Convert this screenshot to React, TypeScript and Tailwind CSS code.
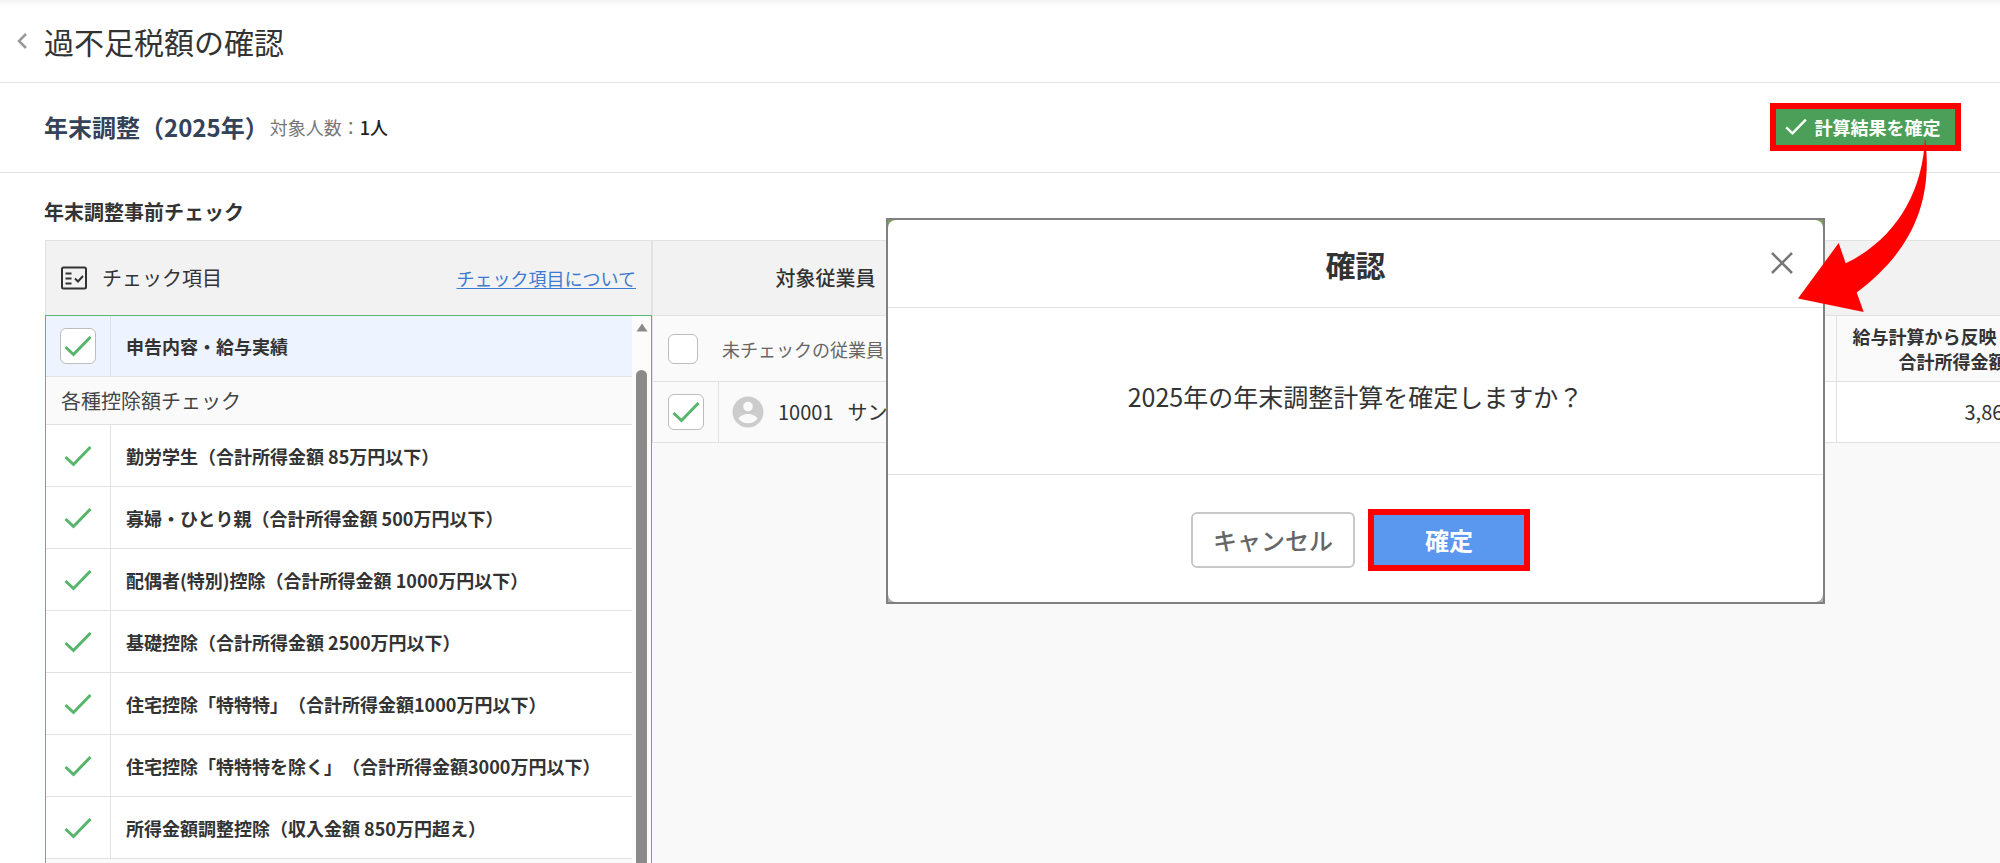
import { ReactNode, useState } from "react";

const deductionChecks = [
  "勤労学生（合計所得金額 85万円以下）",
  "寡婦・ひとり親（合計所得金額 500万円以下）",
  "配偶者(特別)控除（合計所得金額 1000万円以下）",
  "基礎控除（合計所得金額 2500万円以下）",
  "住宅控除「特特特」（合計所得金額1000万円以下）",
  "住宅控除「特特特を除く」（合計所得金額3000万円以下）",
  "所得金額調整控除（収入金額 850万円超え）",
];

function CheckMark({ className }: { className?: string }) {
  return (
    <svg viewBox="0 0 28 22" fill="none" stroke="currentColor" strokeWidth="3" className={className}>
      <path d="M1.5 12 9.5 19.5 26.5 2" />
    </svg>
  );
}

function CheckBox({ label, initial, small }: { label: string; initial?: boolean; small?: boolean }) {
  const [checked, setChecked] = useState(!!initial);

  return (
    <label className={`relative block shrink-0 ${small ? "size-[30px]" : "size-9"}`}>
      <input
        type="checkbox"
        aria-label={label}
        checked={checked}
        onChange={(e) => setChecked(e.target.checked)}
        className="block size-full appearance-none rounded-md border border-[#bdbdbd] bg-white"
      />
      {checked ? (
        <CheckMark className="pointer-events-none absolute inset-0 m-auto w-7 text-[#55b56a]" />
      ) : null}
    </label>
  );
}

function ListIcon() {
  return (
    <svg viewBox="0 0 26 24" fill="none" stroke="#333" strokeWidth="2" className="h-6 w-[26px]">
      <rect x="1" y="1.5" width="24" height="21" rx="1.5" />
      <path d="M4.5 7.5h6M4.5 12.5h6M4.5 17.5h6" />
      <path d="m14 12.500 3 3 5-5.500" />
    </svg>
  );
}

function CheckRow({ mark, children, active }: { mark: ReactNode; children: ReactNode; active?: boolean }) {
  return (
    <li className={`flex shrink-0 border-b border-[#e2e2e2] ${active ? "h-[61px] bg-[#edf4ff]" : "h-[62px] bg-white"}`}>
      <div className="flex w-[65px] items-center justify-center border-r border-[#e2e2e2]">{mark}</div>
      <div className="flex items-center px-[15px] text-lg font-bold">{children}</div>
    </li>
  );
}

function CheckPanel() {
  return (
    <section className="flex w-[607px] shrink-0 flex-col">
      <div className="flex h-[75px] shrink-0 items-center border border-b-0 border-[#e2e2e2] bg-[#f2f2f2] px-[15px]">
        <ListIcon />
        <h3 className="ml-[15px] text-xl">チェック項目</h3>
        <a href="#about" className="ml-auto text-lg text-[#3d7ad1] underline underline-offset-2">
          チェック項目について
        </a>
      </div>
      <div className="flex min-h-0 flex-1 border border-b-0 border-[#5cb870]">
        <ul className="flex min-w-0 flex-1 flex-col overflow-hidden bg-[#fafafa]">
          <CheckRow active mark={<CheckBox label="申告内容・給与実績" initial />}>
            申告内容・給与実績
          </CheckRow>
          <li className="flex h-12 shrink-0 items-center border-b border-[#e2e2e2] px-[15px] text-xl text-[#444]">
            各種控除額チェック
          </li>
          {deductionChecks.map((name) => (
            <CheckRow key={name} mark={<CheckMark className="w-7 text-[#55b56a]" />}>
              {name}
            </CheckRow>
          ))}
        </ul>
        <div className="flex w-[19px] shrink-0 flex-col items-center gap-[38px] bg-[#fcfcfc] pt-[7px]">
          <svg viewBox="0 0 12 9" className="h-[9px] w-3 shrink-0">
            <path d="M6 0.500 11.500 8.500H0.500Z" fill="#8a8a8a" />
          </svg>
          <div className="w-[11px] flex-1 rounded-t-full bg-[#8a8a8a]" />
        </div>
      </div>
    </section>
  );
}

function Avatar() {
  return (
    <svg viewBox="0 0 32 32" className="size-8 shrink-0">
      <circle cx="16" cy="16" r="15.500" fill="#ccc" />
      <circle cx="16" cy="10.500" r="4.800" fill="#fafafa" />
      <path d="M6.500 22.500C8 19.500 12.500 18 16 18s8 1.500 9.500 4.500C23.500 25.500 20 27.200 16 27.200S8.500 25.500 6.500 22.500Z" fill="#fafafa" />
    </svg>
  );
}

function EmployeeTable() {
  return (
    <section className="min-w-0 flex-1 overflow-hidden bg-[#f9f9f9]">
      <table className="w-full table-fixed border-collapse whitespace-nowrap">
        <colgroup>
          <col className="w-[66px]" />
          <col className="w-[280px]" />
          <col />
          <col className="w-[164px]" />
        </colgroup>
        <thead>
          <tr className="h-[75px] border-y border-[#e2e2e2] bg-[#f2f2f2]">
            <th colSpan={2} className="border-x border-[#e2e2e2] text-xl font-medium">
              対象従業員
            </th>
            <th colSpan={2} />
          </tr>
          <tr className="h-[66px] border-b border-[#e2e2e2] bg-[#fafafa]">
            <th colSpan={2} className="border-l border-[#e2e2e2] pl-[15px]">
              <div className="flex items-center gap-6 text-lg font-normal text-[#666]">
                <CheckBox label="未チェックの従業員" small />
                未チェックの従業員
              </div>
            </th>
            <th />
            <th className="overflow-hidden border-l border-[#e2e2e2] pl-4 text-left text-lg leading-[25px] font-bold">
              給与計算から反映
              <br />
              <span className="pl-[46px]">合計所得金額</span>
            </th>
          </tr>
        </thead>
        <tbody>
          <tr className="h-[61px] border-b border-[#e2e2e2] bg-white">
            <td className="border-x border-[#e2e2e2] bg-[#fafafa] pl-[15px]">
              <CheckBox label="10001" initial />
            </td>
            <td className="bg-[#fafafa] pl-[13px]">
              <div className="flex items-center gap-[14px] text-xl">
                <Avatar />
                <span>10001</span>
                <span>サン</span>
              </div>
            </td>
            <td />
            <td className="overflow-hidden border-l border-[#e2e2e2] pl-32 text-xl">3,86</td>
          </tr>
        </tbody>
      </table>
    </section>
  );
}

function ConfirmDialog() {
  return (
    <div
      role="dialog"
      aria-labelledby="confirm-title"
      className="absolute top-[218px] right-[175px] flex w-[939px] flex-col border-2 border-[#808080] bg-linear-to-b from-[#7f9f62] to-[#b0b0b0]"
    >
      <div className="rounded-lg bg-white">
        <div className="relative flex h-[88px] items-center justify-center border-b border-[#e0e0e0]">
          <h2 id="confirm-title" className="text-3xl font-bold">
            確認
          </h2>
          <button aria-label="閉じる" className="absolute top-8 right-[30px]">
            <svg viewBox="0 0 22 22" stroke="#777" strokeWidth="2.500" className="size-[22px]">
              <path d="m1 1 20 20M21 1 1 21" />
            </svg>
          </button>
        </div>
        <p className="flex h-[167px] items-center justify-center border-b border-[#e0e0e0] pt-3 text-[25px]">
          2025年の年末調整計算を確定しますか？
        </p>
        <div className="flex h-[127px] items-center justify-center gap-[13px] pt-[2px] pl-[10px]">
          <button className="h-14 w-[164px] rounded-md border-2 border-[#c8c8c8] text-2xl font-medium text-[#666]">
            キャンセル
          </button>
          <button className="h-[62px] w-[162px] border-6 border-[#ff0000] bg-[#5a98f0] text-2xl font-bold text-white">
            確定
          </button>
        </div>
      </div>
    </div>
  );
}

function PointerArrow() {
  return (
    <svg
      viewBox="1796 134 134 182"
      fill="#ff0000"
      className="pointer-events-none absolute top-[134px] right-[70px] h-[182px] w-[134px]"
    >
      <path d="M1925 137C1934 205 1909 253 1856.700 292.500L1863.700 312 1798 298.500 1838.700 243 1845.700 263.300C1894 240 1923 194 1925 137Z" />
    </svg>
  );
}

export default function App() {
  return (
    <div className="relative flex h-screen flex-col overflow-hidden bg-white font-['Noto_Sans_CJK_JP',sans-serif] text-[#333] [text-spacing-trim:space-all]">
      <div className="h-[6px] shrink-0 bg-linear-to-b from-[#f3f3f3] to-white" />
      <header className="flex h-[77px] shrink-0 items-center border-b border-[#e2e2e2] pb-[6px] pl-4">
        <button aria-label="戻る">
          <svg viewBox="0 0 12 18" fill="none" stroke="#999" strokeWidth="2.500" className="h-[18px] w-3">
            <path d="M10 2 3 9l7 7" />
          </svg>
        </button>
        <h1 className="ml-4 text-3xl">過不足税額の確認</h1>
      </header>
      <div className="flex h-[90px] shrink-0 items-center border-b border-[#e2e2e2] pr-[39px] pb-[2px] pl-11">
        <h2 className="text-2xl font-bold text-[#34435a]">年末調整（2025年）</h2>
        <p className="ml-px text-lg text-[#777]">
          対象人数：<span className="font-medium text-[#222]">1人</span>
        </p>
        <button className="ml-auto flex h-12 w-[191px] items-center justify-center gap-2 border-6 border-[#ff0000] bg-[#4c9f58] pr-[6px] text-lg font-bold text-white">
          <CheckMark className="w-[22px]" />
          計算結果を確定
        </button>
      </div>
      <h2 className="shrink-0 pt-6 pb-[13px] pl-11 text-xl leading-[30px] font-bold">
        年末調整事前チェック
      </h2>
      <main className="flex min-h-0 flex-1 pl-[45px]">
        <CheckPanel />
        <EmployeeTable />
      </main>
      <ConfirmDialog />
      <PointerArrow />
    </div>
  );
}
